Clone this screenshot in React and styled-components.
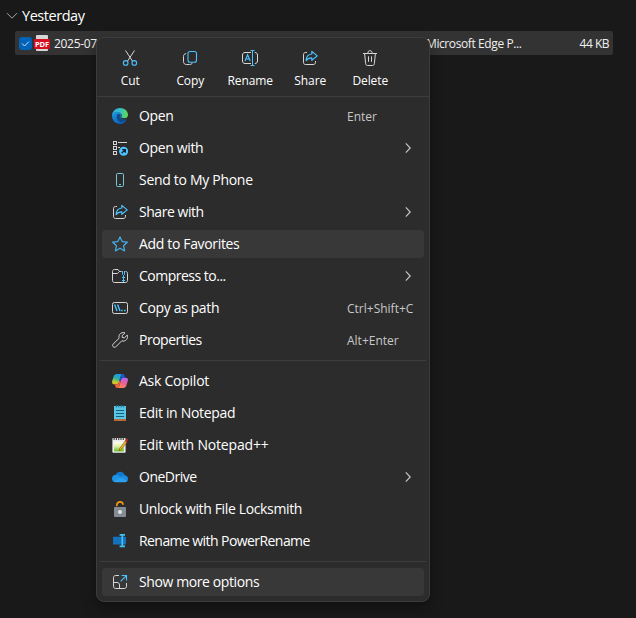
import styled, { createGlobalStyle, css } from 'styled-components'

const LINE = '#d6d6d6'
const BLUE = '#4cc2ff'

const CutIcon = () => (
	<svg width='16' height='16' viewBox='0 0 16 16' fill='none'>
		<path d='M3.5 0.5L10.4 11M12.5 0.5L5.6 11' stroke={LINE} />
		<circle cx='3.7' cy='12.9' r='2.3' stroke={BLUE} strokeWidth='1.1' />
		<circle cx='12.3' cy='12.9' r='2.3' stroke={BLUE} strokeWidth='1.1' />
	</svg>
)

const CopyIcon = () => (
	<svg width='16' height='16' viewBox='0 0 16 16' fill='none'>
		<path d='M4.2 3.6C2.4 3.8 1.5 4.8 1.5 6.4V11.5C1.5 13.4 2.6 14.5 4.5 14.5H7.6C9 14.5 9.9 14 10.4 12.9' stroke={LINE} />
		<rect x='6' y='1.5' width='8.5' height='10.8' rx='2' stroke={BLUE} strokeWidth='1.1' />
	</svg>
)

const RenameIcon = () => (
	<svg width='16' height='16' viewBox='0 0 16 16' fill='none'>
		<path d='M9 2.5H3C1.5 2.5 0.5 3.5 0.5 5V11C0.5 12.5 1.5 13.5 3 13.5H9M12.8 2.5C14.6 2.5 15.5 3.5 15.5 5V11C15.5 12.5 14.6 13.5 12.8 13.5' stroke={LINE} />
		<path d='M3 11L5.6 4.7L8.2 11M3.9 9H7.3' stroke={BLUE} strokeWidth='1.2' />
		<path d='M8.5 0.5H12.5M8.5 15.5H12.5M10.5 0.5V15.5' stroke={BLUE} />
	</svg>
)

const ShareIcon = () => (
	<svg width='16' height='16' viewBox='0 0 16 16' fill='none'>
		<path d='M5 2.5H3.5C2.2 2.5 1.5 3.3 1.5 4.7V12.3C1.5 13.7 2.2 14.5 3.5 14.5H11.1C12.7 14.5 13.5 13.7 13.5 12.3V11' stroke={LINE} />
		<path
			d='M9.8 1.4L15.2 5.9L9.8 10.3V7.8C7.2 7.7 5.5 8.5 4.1 10.6C4.3 6.8 6.3 4.3 9.8 4Z'
			stroke={BLUE}
			strokeWidth='1.2'
			strokeLinejoin='round' />
	</svg>
)

const DeleteIcon = () => (
	<svg width='16' height='16' viewBox='0 0 16 16' fill='none' stroke={LINE}>
		<path d='M1 3.5H15M5.9 3.1C5.9 1.5 6.6 0.7 8 0.7C9.4 0.7 10.1 1.5 10.1 3.1' />
		<path d='M2.6 3.4L3.6 13.4C3.7 14.8 4.4 15.5 5.6 15.5H10.4C11.6 15.5 12.3 14.8 12.4 13.4L13.4 3.4' />
		<path d='M6.5 6.3V11.8M9.5 6.3V11.8' />
	</svg>
)

const EdgeIcon = () => (
	<svg width='16' height='16' viewBox='0 0 16 16'>
		<defs>
			<linearGradient id='edgeTop' x1='0' y1='0.4' x2='1' y2='0.5'>
				<stop offset='0' stopColor='#2aa9e8' />
				<stop offset='0.5' stopColor='#33c3c8' />
				<stop offset='1' stopColor='#62dc4c' />
			</linearGradient>
			<linearGradient id='edgeBody' x1='0' y1='0' x2='0.6' y2='1'>
				<stop offset='0' stopColor='#1b9de2' />
				<stop offset='1' stopColor='#0f5cb4' />
			</linearGradient>
		</defs>
		<path d='M0 8C0 4.8 2.8 4 5.3 4C8.2 4 9.5 5.6 9.3 7.3C8.4 8.5 8.3 9.6 9.4 10.7C11 12.1 13.3 12 14.9 11.2C13.5 14.1 11 16 8 16C3.6 16 0 12.4 0 8Z' fill='url(#edgeBody)' />
		<path d='M5.5 6.3C4.2 8 4.4 11.7 7.2 13.5C9.6 15 12.7 13.5 14.9 11.2C12.6 12.2 10 11.9 8.6 10.5C7.5 9.4 7.7 8 8.7 7.2C8 6 6.8 5.7 5.5 6.3Z' fill='#114a8b' />
		<path d='M0 7.4C0.4 3.2 3.8 0 8 0C12.6 0 16 3.3 16 6.7C16 9 14.4 10.3 12.3 10.3C10.4 10.3 9.1 9.7 9.1 9.1C9.1 8.7 9.8 8.4 9.8 7.3C9.8 5.5 7.8 4.1 5.3 4.1C2.8 4.1 0.7 5.4 0 7.4Z' fill='url(#edgeTop)' />
	</svg>
)

const OpenWithIcon = () => (
	<svg width='16' height='16' viewBox='0 0 16 16' fill='none'>
		<g stroke={LINE}>
			<rect x='1.5' y='1.5' width='3' height='3' />
			<rect x='1.5' y='6.5' width='3' height='3' />
			<rect x='1.5' y='11.5' width='3' height='3' />
			<path d='M6 2.5H15M6 7.5H8' />
		</g>
		<circle cx='11.6' cy='11.3' r='4.5' fill={BLUE} />
		<path d='M9.6 13.3L13 9.9M10.2 9.6H13.3V12.7' stroke='#10222c' strokeWidth='1.3' />
	</svg>
)

const PhoneIcon = () => (
	<svg width='16' height='16' viewBox='0 0 16 16' fill='none' stroke='#7cc6d6'>
		<rect x='4.5' y='1.5' width='7' height='13' rx='1.2' />
		<path d='M7 12.5H9' />
	</svg>
)

const StarIcon = () => (
	<svg width='16' height='16' viewBox='0 0 16 16' fill='none'>
		<path
			d='M8 0.9L10.2 5.6L15.3 6.2L11.5 9.7L12.6 14.9L8 12.3L3.4 14.9L4.5 9.7L0.7 6.2L5.8 5.6Z'
			stroke='#45b0ea'
			strokeWidth='1.2'
			strokeLinejoin='round' />
	</svg>
)

const ZipIcon = () => (
	<svg width='16' height='16' viewBox='0 0 16 16' fill='none'>
		<path d='M9.5 3.5H7.5L6 1.5H2.4C1.2 1.5 0.5 2.3 0.5 3.5V12.4C0.5 13.7 1.2 14.5 2.5 14.5H13.5C14.8 14.5 15.5 13.7 15.5 12.4V5.4C15.5 4.2 14.8 3.5 13.5 3.5M0.5 5.5H5.2C6.4 5.5 6.6 3.5 7.6 3.5' stroke={LINE} />
		<path d='M10.5 3V6.5L11.5 7.5M12.5 3V6.5L11.5 7.5M11.5 7.5V14M10 9.5H13M10 12.5H13' stroke={BLUE} />
	</svg>
)

const PathIcon = () => (
	<svg width='16' height='16' viewBox='0 0 16 16' fill='none'>
		<rect x='0.5' y='2.5' width='15' height='11' rx='1.8' stroke={LINE} />
		<path d='M2.6 4.4L5 11M5.6 4.4L8 11' stroke={BLUE} strokeWidth='1.4' />
		<path d='M9.2 10.5H10.7M12.1 10.5H13.6' stroke={BLUE} strokeWidth='1.4' />
	</svg>
)

const WrenchIcon = () => (
	<svg width='16' height='16' viewBox='0 0 16 16' fill='none'>
		<path
			d='M13 0.9C10.9 0 8.4 0.8 7.4 2.8C6.8 4 6.8 5.1 7.2 6.2L1.1 12.1C0.4 12.8 0.4 13.9 1.1 14.7C1.9 15.5 3.1 15.5 3.8 14.8L9.8 8.8C11.4 9.4 13.3 9 14.5 7.6C15.6 6.3 15.8 4.6 15.2 3.1L12.4 5.8L10.3 5.6L10.1 3.6Z'
			stroke={LINE}
			strokeLinejoin='round' />
	</svg>
)

const CopilotIcon = () => (
	<svg width='16' height='16' viewBox='0 0 16 16'>
		<defs>
			<linearGradient id='copLeft' x1='0.6' y1='0' x2='0.3' y2='1'>
				<stop offset='0' stopColor='#1d9bee' />
				<stop offset='0.45' stopColor='#2fae9c' />
				<stop offset='0.75' stopColor='#a9cf3a' />
				<stop offset='1' stopColor='#f2b824' />
			</linearGradient>
			<linearGradient id='copRight' x1='0.7' y1='0' x2='0.3' y2='1'>
				<stop offset='0' stopColor='#b566f0' />
				<stop offset='0.5' stopColor='#f0608f' />
				<stop offset='1' stopColor='#fb8a50' />
			</linearGradient>
		</defs>
		<path d='M4.8 1H10.8C9.6 1 9.1 1.8 8.6 3.4L6.8 9.4C6.4 10.7 5.8 11.3 4.6 11.3H2.2C0.2 11.3 -0.3 9.8 0.3 7.8L1.6 3.5C2.1 1.9 3 1 4.8 1Z' fill='url(#copLeft)' />
		<path d='M11.2 15H5.2C6.4 15 6.9 14.2 7.4 12.6L9.2 6.6C9.6 5.3 10.2 4.7 11.4 4.7H13.8C15.8 4.7 16.3 6.2 15.7 8.2L14.4 12.5C13.9 14.1 13 15 11.2 15Z' fill='url(#copRight)' />
		<path d='M8.9 2.6C9.3 1.4 9.9 1 10.8 1C12 1 12.4 1.8 12.8 3.2C13.1 4.2 13.4 4.7 14 4.7H11.4C9.9 4.7 9.5 5.4 9.1 6.8L8.6 8.4L7.3 7.8Z' fill='#1759cf' />
		<path d='M7.1 13.4C6.7 14.6 6.1 15 5.2 15C4 15 3.6 14.2 3.2 12.8C2.9 11.8 2.6 11.3 2 11.3H4.6C6.1 11.3 6.5 10.6 6.9 9.2L7.3 7.8L8.7 8.2Z' fill='#f2603e' />
	</svg>
)

const NotepadIcon = () => (
	<svg width='16' height='16' viewBox='0 0 16 16'>
		<rect x='2' y='1' width='12' height='13.4' fill='#58c5e3' />
		<rect x='2' y='14' width='12' height='2' fill='#b9683a' />
		<path d='M4.5 0V2.4M6.8 0V2.4M9.1 0V2.4M11.4 0V2.4' stroke='#176f95' />
		<path d='M4 5.5H12M4 8.5H12M4 11.5H12' stroke='#145f80' strokeWidth='1.1' />
	</svg>
)

const NotepadPlusIcon = () => (
	<svg width='16' height='16' viewBox='0 0 16 16'>
		<defs>
			<linearGradient id='npp' x1='0' y1='0' x2='0' y2='1'>
				<stop offset='0' stopColor='#fdfff4' />
				<stop offset='0.45' stopColor='#e4f0a8' />
				<stop offset='1' stopColor='#62bd1e' />
			</linearGradient>
		</defs>
		<rect x='0.4' y='1' width='13.2' height='14.8' rx='0.8' fill='#eeeeee' />
		<rect x='2' y='5' width='10' height='9.4' fill='url(#npp)' />
		<path d='M1.5 2H12.5' stroke='#444' strokeWidth='1.8' strokeDasharray='1.2 1.1' />
		<path d='M7.6 11.7L13.2 3.8L15 5.1L9.4 12.6L7.2 13.8Z' fill='#f0b428' stroke='#70531a' strokeWidth='0.6' />
		<path d='M13 4L14.2 1.4L16 2.7L14.8 5.2Z' fill='#d52b26' />
	</svg>
)

const OneDriveIcon = () => (
	<svg width='16' height='16' viewBox='0 0 16 16'>
		<path d='M3.7 6C4.6 4 6.3 2.8 8.2 2.8C10.5 2.8 12.3 4.3 13 6.5L8.8 9.5L3 8.2Z' fill='#1278cf' />
		<path d='M0 9.7C0 7.4 1.7 5.8 3.9 5.8C5.3 5.8 6.2 6.3 7.3 7L10.8 9.2L3 13.1C1.2 12.8 0 11.4 0 9.7Z' fill='#1b93e6' />
		<path d='M8.5 8C9.5 7 10.8 6.3 12.2 6.3C14.4 6.3 16 7.8 16 9.8C16 10.6 15.7 11.4 15.3 12L9 9.3Z' fill='#1a8ce2' />
		<path d='M1.4 12.3L9 8.6L15.5 11.7C14.8 12.8 13.8 13.2 12.6 13.2H3.7C2.8 13.2 2 12.8 1.4 12.3Z' fill='#2b9ff0' />
	</svg>
)

const LockIcon = () => (
	<svg width='16' height='16' viewBox='0 0 16 16' fill='none'>
		<path d='M4.8 5.2V4.2C4.8 2.1 6 0.9 8 0.9C9.9 0.9 11 2 11.1 3.7' stroke='#f39a16' strokeWidth='1.6' />
		<rect x='2' y='6' width='12' height='10' rx='0.8' fill='#858c93' />
		<circle cx='8' cy='10.9' r='2' fill='#dfe4e8' />
	</svg>
)

const PowerRenameIcon = () => (
	<svg width='16' height='16' viewBox='0 0 16 16' fill='none'>
		<rect x='1' y='3.8' width='13' height='7.8' rx='0.6' fill='#1671bd' />
		<path d='M7.6 1.8H13M7.6 13.4H13M10.3 1.8V13.4' stroke='#3fc3f3' strokeWidth='1.7' />
	</svg>
)

const MoreIcon = () => (
	<svg width='16' height='16' viewBox='0 0 16 16' fill='none'>
		<path d='M7 1.5H3.8C2.3 1.5 1.5 2.3 1.5 3.8V12.2C1.5 13.7 2.3 14.5 3.8 14.5H12.2C13.7 14.5 14.5 13.7 14.5 12.2V9M1.5 8.5H5C6.7 8.5 7.5 9.3 7.5 11V14.5' stroke={LINE} />
		<path d='M8.6 7.4L14.5 1.5M9.6 1.5H14.5V6.4' stroke={BLUE} strokeWidth='1.1' />
	</svg>
)

const ACTIONS = [
	{ label: 'Cut', Icon: CutIcon },
	{ label: 'Copy', Icon: CopyIcon },
	{ label: 'Rename', Icon: RenameIcon },
	{ label: 'Share', Icon: ShareIcon },
	{ label: 'Delete', Icon: DeleteIcon }
]

const GROUPS = [
	[
		{ label: 'Open', Icon: EdgeIcon, keys: 'Enter' },
		{ label: 'Open with', Icon: OpenWithIcon, sub: true },
		{ label: 'Send to My Phone', Icon: PhoneIcon, tracking: -0.3 },
		{ label: 'Share with', Icon: ShareIcon, sub: true, tracking: -0.46 },
		{ label: 'Add to Favorites', Icon: StarIcon, active: true, tracking: -0.34 },
		{ label: 'Compress to...', Icon: ZipIcon, sub: true, tracking: -0.5 },
		{ label: 'Copy as path', Icon: PathIcon, keys: 'Ctrl+Shift+C' },
		{ label: 'Properties', Icon: WrenchIcon, keys: 'Alt+Enter', tracking: -0.5 }
	],
	[
		{ label: 'Ask Copilot', Icon: CopilotIcon, tracking: -0.25 },
		{ label: 'Edit in Notepad', Icon: NotepadIcon, tracking: -0.32 },
		{ label: 'Edit with Notepad++', Icon: NotepadPlusIcon, tracking: -0.17 },
		{ label: 'OneDrive', Icon: OneDriveIcon, sub: true, tracking: -0.5 },
		{ label: 'Unlock with File Locksmith', Icon: LockIcon },
		{ label: 'Rename with PowerRename', Icon: PowerRenameIcon, tracking: -0.57 }
	],
	[
		{ label: 'Show more options', Icon: MoreIcon, active: true, tracking: -0.4 }
	]
]

const App = () => (
	<Explorer>
		<GlobalStyle />
		<GroupHeader>
			<svg width='12' height='8' viewBox='0 0 12 8' fill='none'>
				<path d='M1 1.2L6 6.2L11 1.2' stroke='#a8a8a8' />
			</svg>
			<GroupTitle>Yesterday</GroupTitle>
		</GroupHeader>
		<FileRow>
			<Checkbox>
				<svg width='13' height='13' viewBox='0 0 13 13' fill='none'>
					<path d='M3 6.5L5.5 9L10 4.5' stroke='#d5e6f6' />
				</svg>
			</Checkbox>
			<PdfIcon>
				<PdfBand>PDF</PdfBand>
			</PdfIcon>
			<FileName>2025-07-14</FileName>
			<FileType>Microsoft Edge P...</FileType>
			<FileSize>44 KB</FileSize>
		</FileRow>
		<Menu>
			<ActionBar>
				{ACTIONS.map(({ label, Icon }) => (
					<Action key={label}>
						<Icon />
						<ActionLabel>{label}</ActionLabel>
					</Action>
				))}
			</ActionBar>
			{GROUPS.map((items, index) => (
				<MenuGroup key={index}>
					{items.map(({ label, Icon, keys, sub, active, tracking }) => (
						<MenuItem key={label} $active={active}>
							<Icon />
							<ItemLabel $tracking={tracking}>{label}</ItemLabel>
							{keys && <Shortcut>{keys}</Shortcut>}
							{sub && (
								<SubArrow width='8' height='12' viewBox='0 0 8 12' fill='none'>
									<path d='M1.8 1.4L6.2 6L1.8 10.6' stroke='#c4c4c4' strokeWidth='1.2' />
								</SubArrow>
							)}
						</MenuItem>
					))}
				</MenuGroup>
			))}
		</Menu>
	</Explorer>
)

const GlobalStyle = createGlobalStyle`
	body {
		margin: 0;
		background: #191919;
	}
	* {
		box-sizing: border-box;
	}
	svg {
		display: block;
		flex: none;
	}
`

const Explorer = styled.div`
	position: relative;
	height: 618px;
	overflow: hidden;
	background: #191919;
	color: #ffffff;
	font-family: 'Open Sans', 'Noto Sans', sans-serif;
	white-space: nowrap;
`

const GroupHeader = styled.div`
	display: flex;
	align-items: center;
	gap: 4px;
	height: 31px;
	padding-left: 6px;
`

const GroupTitle = styled.span`
	font-size: 14.5px;
	line-height: 20px;
	letter-spacing: -0.45px;
`

const FileRow = styled.div`
	display: flex;
	align-items: center;
	width: 598px;
	height: 24px;
	margin-left: 15px;
	padding: 0 4px;
	border-radius: 2px;
	background: #333333;
	color: #f0f0f0;
	font-size: 12px;
	line-height: 16px;
`

const Checkbox = styled.span`
	width: 13px;
	height: 13px;
	border-radius: 3px;
	background: #0063b8;
`

const PdfIcon = styled.span`
	display: flex;
	align-items: center;
	justify-content: center;
	width: 12px;
	height: 16px;
	margin-left: 4px;
	border-radius: 1px;
	background: #d6d6d6;
`

const PdfBand = styled.span`
	flex: none;
	width: 16px;
	height: 10px;
	margin-top: 2px;
	border-radius: 1px;
	background: #d80f20;
	color: #ffffff;
	font-size: 7.5px;
	font-weight: 700;
	line-height: 10px;
	letter-spacing: -0.1px;
	text-align: center;
`

const FileName = styled.span`
	width: 372px;
	margin: 1px 0 0 6px;
	letter-spacing: -0.3px;
`

const FileType = styled.span`
	flex: 1;
	margin-top: 1px;
	letter-spacing: -0.4px;
`

const FileSize = styled.span`
	margin-top: 1px;
	letter-spacing: -0.5px;
`

const Menu = styled.div`
	position: absolute;
	top: 37px;
	left: 96px;
	width: 334px;
	height: 565px;
	border: 1px solid #3c3c3c;
	border-radius: 8px;
	background: #2c2c2c;
	box-shadow: 0 6px 14px rgba(0, 0, 0, 0.35);
`

const ActionBar = styled.div`
	display: flex;
	height: 59px;
	padding: 12px 3px 0;
	border-bottom: 1px solid #3d3d3d;
`

const Action = styled.div`
	display: flex;
	flex-direction: column;
	align-items: center;
	gap: 6px;
	width: 60px;
`

const ActionLabel = styled.span`
	padding-left: 0.5px;
	font-size: 12px;
	line-height: 17px;
	letter-spacing: -0.1px;
`

const MenuGroup = styled.div`
	margin: 0 3px;
	padding: 3px 0 4px;
	& + & {
		padding-top: 4px;
		border-top: 1px solid #3d3d3d;
	}
`

const MenuItem = styled.div`
	display: grid;
	grid-template-columns: 16px 197px 1fr;
	column-gap: 11px;
	align-items: center;
	height: 28px;
	margin: 2px 2px 4px;
	padding-left: 10px;
	border-radius: 4px;
	${({ $active }) => $active && css`
		background: #383838;
	`}
	&:last-child {
		margin-bottom: 2px;
	}
`

const ItemLabel = styled.span`
	font-size: 14px;
	line-height: 20px;
	letter-spacing: ${({ $tracking = -0.36 }) => $tracking}px;
`

const Shortcut = styled.span`
	margin-top: 2px;
	color: #c8c8c8;
	font-size: 12px;
	line-height: 16px;
`

const SubArrow = styled.svg`
	justify-self: end;
	margin-right: 12px;
`

export default App
